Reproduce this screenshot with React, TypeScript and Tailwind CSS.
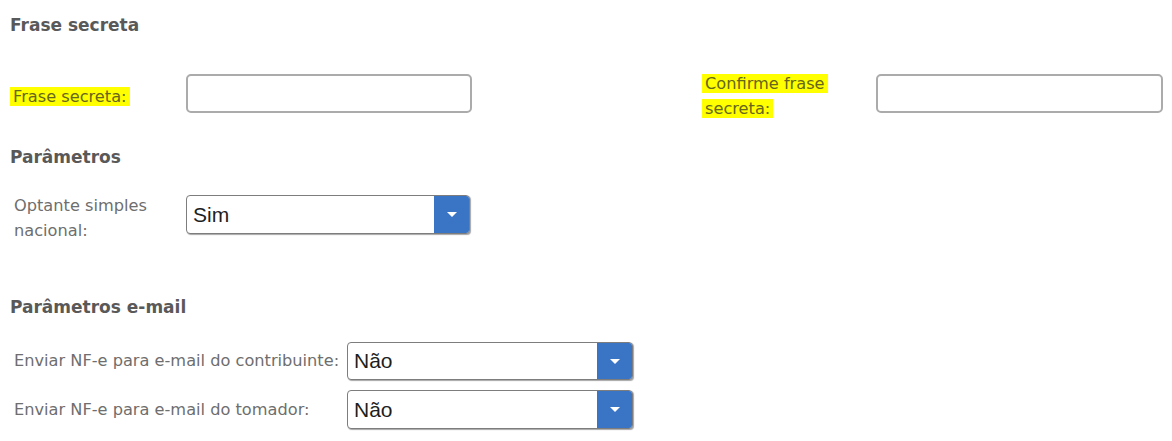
import { ReactNode } from 'react';

const font = { fontFamily: '"DejaVu Sans", Verdana, sans-serif' };

function SectionTitle({ children, className }: { children: ReactNode; className?: string }) {
    return (
        <h2 className={`text-[17px] font-bold leading-none text-[#595959] ${className ?? ''}`}>
            {children}
        </h2>
    );
}

function Highlight({ children }: { children: ReactNode }) {
    return (
        <span className="bg-[#ffff00] px-[3px] text-[#66661c] [box-decoration-break:clone] [-webkit-box-decoration-break:clone]">
            {children}
        </span>
    );
}

function TextInput({ className }: { className?: string }) {
    return (
        <input
            type="password"
            className={`h-[39px] shrink-0 rounded-[5px] border-2 border-[#ababab] bg-white outline-none ${className ?? ''}`}
        />
    );
}

function SelectBox({ value, className }: { value: string; className?: string }) {
    return (
        <div
            className={`flex shrink-0 items-stretch overflow-hidden rounded-[4px] border border-[#7d7d7d] bg-white shadow-[1px_1px_1px_rgba(0,0,0,0.35)] ${className ?? ''}`}
        >
            <span
                className="flex flex-1 items-center pl-[6px] text-[21px] text-[#1e1e1e]"
                style={{ fontFamily: '"Liberation Sans", Arial, sans-serif' }}
            >
                {value}
            </span>
            <span className="flex w-[35px] items-center justify-center bg-[#3a74c4]">
                <svg width="10" height="5" viewBox="0 0 10 5">
                    <path d="M0 0h10L5 5z" fill="#fff" />
                </svg>
            </span>
        </div>
    );
}

export default function App() {
    return (
        <div className="min-h-[441px] w-[1172px] bg-white pl-[10px] text-[16.2px] text-[#6e6e6e]" style={font}>
            {/* Frase secreta */}
            <SectionTitle className="pt-[17px]">Frase secreta</SectionTitle>
            <div className="mt-[40px] flex items-start">
                <div className="mt-[10px] w-[176px] leading-[25px]">
                    <Highlight>Frase secreta:</Highlight>
                </div>
                <TextInput className="w-[286px]" />
                <div className="-mt-[3px] ml-[230px] w-[174px] pr-[40px] leading-[25px]">
                    <Highlight>Confirme frase secreta:</Highlight>
                </div>
                <TextInput className="w-[287px]" />
            </div>

            {/* Parâmetros */}
            <SectionTitle className="mt-[28px]">Parâmetros</SectionTitle>
            <div className="mt-[29px] flex items-start">
                <div className="-mt-[2px] w-[176px] pl-[4px] pr-[30px] leading-[25px]">
                    Optante simples nacional:
                </div>
                <SelectBox value="Sim" className="h-[39px] w-[284px]" />
            </div>

            {/* Parâmetros e-mail */}
            <SectionTitle className="mt-[56px]">Parâmetros e-mail</SectionTitle>
            <div className="mt-[26px] flex flex-col gap-[10px]">
                <div className="flex items-center">
                    <div className="w-[337px] whitespace-nowrap pl-[4px] leading-[20px]">
                        Enviar NF-e para e-mail do contribuinte:
                    </div>
                    <SelectBox value="Não" className="h-[38px] w-[286px]" />
                </div>
                <div className="flex items-center">
                    <div className="w-[337px] whitespace-nowrap pl-[4px] leading-[20px]">
                        Enviar NF-e para e-mail do tomador:
                    </div>
                    <SelectBox value="Não" className="h-[39px] w-[286px]" />
                </div>
            </div>
        </div>
    );
}
